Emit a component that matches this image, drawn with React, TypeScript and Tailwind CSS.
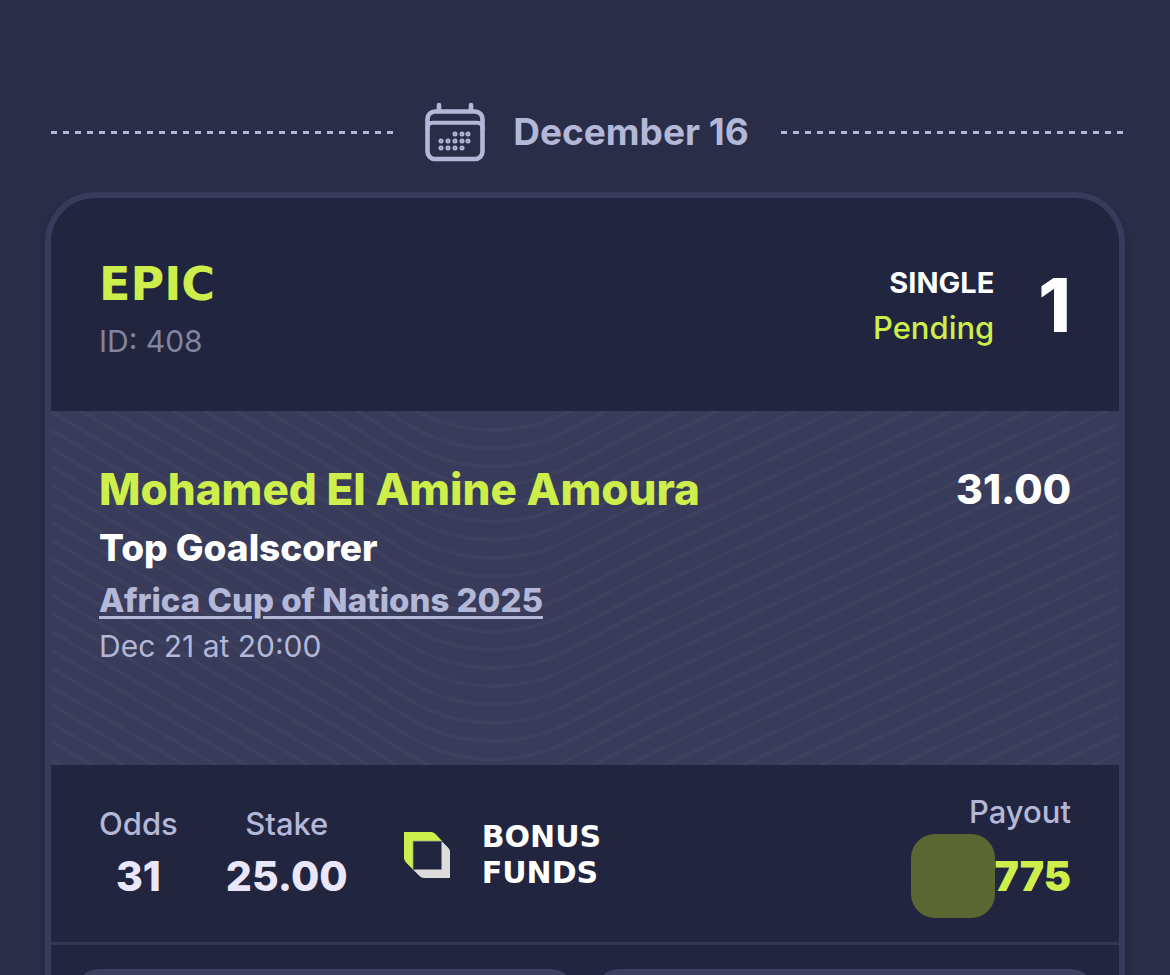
import React from "react";

const CalendarIcon = () => {
  const dots = [
    [30, 32], [37, 32], [43, 32],
    [16, 39], [23, 39], [30, 39], [37, 39], [43, 39],
    [16, 46], [23, 46], [30, 46], [37, 46],
  ];

  return (
    <svg viewBox="0 0 60 60" className="size-[60px] shrink-0" fill="none" stroke="#b4b8d8" aria-hidden="true">
      <rect x="2.5" y="9.5" width="55" height="47.5" rx="7.5" strokeWidth="4.6" />
      <path d="M2.500 28V26Q2.500 20.700 8 20.700H52Q57.500 20.700 57.500 26V28" strokeWidth="4" />
      <path d="M14 3V9M46 3V9" strokeWidth="4.6" strokeLinecap="round" />
      {dots.map(([x, y]) => (
        <circle key={`${x}-${y}`} cx={x} cy={y} r="1.5" strokeWidth="2" />
      ))}
    </svg>
  );
};

const BonusIcon = () => (
  <svg viewBox="0 0 46 46" className="size-[46px] shrink-0" aria-hidden="true">
    <path d="M0 0H27Q29.500 0 31.500 2L38 9H9V37.500L2 30.500Q0 28.500 0 26Z" fill="#cdee4b" />
    <path d="M37.500 9L44 15.500Q46 17.500 46 20V46H20Q17.500 46 15.500 44L9 37.500H37.500Z" fill="#dedcdb" />
    <path d="M9 37.500V9H37.500" fill="none" stroke="#a3ab91" strokeWidth="0.8" />
  </svg>
);

/* wavy background of the selection */
const Waves = () => (
  <svg
    viewBox="0 0 1068 354"
    preserveAspectRatio="none"
    className="absolute inset-0 h-full w-full"
    fill="none"
    stroke="#3d405e"
    strokeWidth="4"
    aria-hidden="true"
  >
    {Array.from({ length: 36 }, (_, i) => (
      <path
        key={i}
        transform={`translate(0 ${19 + i * 18.3})`}
        d="M0 -238L281 -72C345 -34 375 0 441 0C500 0 520 -22 611 -66L1068 -281"
      />
    ))}
  </svg>
);

const DashedLine = () => (
  <div className="h-[3px] flex-1 bg-[repeating-linear-gradient(90deg,#b4b8d8_0_6px,transparent_6px_12px)]"></div>
);

interface StatProps {
  label: string;
  value: string;
}

const Stat = ({ label, value }: StatProps) => (
  <div className="flex flex-col items-center">
    <span className="text-[31px] font-medium leading-[45px] text-[#b4b8d8]">{label}</span>
    <span className="text-[41px] font-extrabold leading-[60px] text-[#e9e7f9]">{value}</span>
  </div>
);

const App = () => {
  return (
    <main className="h-screen overflow-hidden bg-[#2a2d48] px-[45px] pt-[102px] font-['Inter',sans-serif]">
      {/* date */}
      <div className="flex items-center pl-1.5 pr-0.5">
        <DashedLine />
        <div className="ml-8 mr-8 flex items-center gap-7">
          <CalendarIcon />
          <h2 className="text-[37px] font-bold leading-[60px] text-[#b4b8d8]">December 16</h2>
        </div>
        <DashedLine />
      </div>

      {/* bet card */}
      <article className="mt-[30px] overflow-hidden rounded-t-[50px] border-6 border-b-0 border-[#383b5b] bg-[#22253f] shadow-[0_6px_6px_rgba(20,22,45,0.4)]">
        <header className="flex h-[213px] items-center justify-between px-12">
          <div className="flex flex-col pt-3">
            <span className="font-['DejaVu_Sans',sans-serif] text-[46px] font-bold leading-[60px] text-[#cdee4b]">EPIC</span>
            <span className="text-[30px] leading-[54px] text-[#82859f]">ID: 408</span>
          </div>
          <div className="flex items-center gap-11">
            <div className="flex flex-col text-right leading-[45px]">
              <span className="text-[29px] font-bold text-white">SINGLE</span>
              <span className="text-[31px] font-medium text-[#cdee4b]">Pending</span>
            </div>
            <span className="text-[74px] font-extrabold leading-[90px] text-white">1</span>
          </div>
        </header>

        <section className="relative bg-[#383b59]">
          <Waves />
          <div className="relative flex items-start justify-between px-12 pt-12 pb-24">
            <div className="flex flex-col items-start">
              <h3 className="text-[44px] font-extrabold leading-[60px] text-[#cdee4b]">Mohamed El Amine Amoura</h3>
              <p className="text-[37px] font-extrabold leading-[57px] text-white">Top Goalscorer</p>
              <a href="#" className="text-[33px] font-extrabold leading-[48px] text-[#b4b8d8] underline decoration-3 underline-offset-4">
                Africa Cup of Nations 2025
              </a>
              <time className="text-[30px] leading-[45px] text-[#b4b8d8]">Dec 21 at 20:00</time>
            </div>
            <span className="text-[41px] font-extrabold leading-[60px] text-white">31.00</span>
          </div>
        </section>

        <section className="flex items-center justify-between border-b-3 border-[#343752] px-12 py-6">
          <div className="flex items-center">
            <Stat label="Odds" value="31" />
            <div className="ml-12">
              <Stat label="Stake" value="25.00" />
            </div>
            <div className="ml-14 flex items-center gap-8 pt-0.5">
              <BonusIcon />
              <p className="font-['DejaVu_Sans',sans-serif] text-[30px] font-bold leading-9 text-white">
                BONUS
                <br />
                FUNDS
              </p>
            </div>
          </div>
          <div className="flex flex-col items-end">
            <span className="text-[31px] font-medium leading-[45px] text-[#b4b8d8]">Payout</span>
            <div className="flex items-center">
              <span className="size-[84px] rounded-3xl bg-[#5b6733]"></span>
              <span className="text-[41px] font-black leading-[60px] text-[#cdee4b]">775</span>
            </div>
          </div>
        </section>

        <div className="grid grid-cols-2 gap-5 p-6">
          <button aria-label="Share bet" className="h-24 rounded-3xl bg-[#3c3f60]"></button>
          <button aria-label="Bet details" className="h-24 rounded-3xl bg-[#3c3f60]"></button>
        </div>
      </article>
    </main>
  );
};

export default App;
